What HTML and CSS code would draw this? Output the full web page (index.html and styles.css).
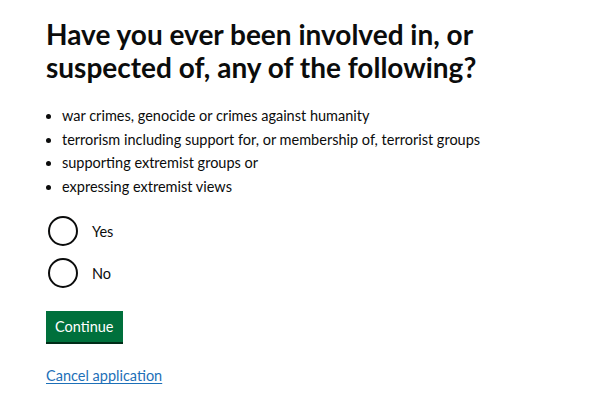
FILE: index.html
```html
<!DOCTYPE html>
<html lang="en">
<head>
    <meta charset="UTF-8">
    <title>Security questions</title>
    <link rel="stylesheet" href="styles.css">
</head>
<body>
    <main class="page">
        <form class="question">
            <h1 class="question_title">Have you ever been involved in, or suspected of, any of the following?</h1>

            <ul class="bullets">
                <li>war crimes, genocide or crimes against humanity</li>
                <li>terrorism including support for, or membership of, terrorist groups</li>
                <li>supporting extremist groups or</li>
                <li>expressing extremist views</li>
            </ul>

            <div class="radios">
                <label class="radio">
                    <input type="radio" name="involved" value="yes">
                    <span class="radio_label">Yes</span>
                </label>
                <label class="radio">
                    <input type="radio" name="involved" value="no">
                    <span class="radio_label">No</span>
                </label>
            </div>

            <button type="submit" class="continue">Continue</button>
        </form>

        <a href="#" class="cancel">Cancel application</a>
    </main>
</body>
</html>
```

FILE: styles.css
```css
/*tag*/
body{
    margin: 0;
    background: #ffffff;
    color: #0b0c0c;
    font-family: Lato, "Noto Sans", Arial, sans-serif;
}

/*class*/
.page{
    padding: 18px 46px 0 46px;
}
.question_title{
    margin: 0 0 20px 0;
    font-size: 28px;
    line-height: 33px;
    font-weight: bold;
    width: 480px;
}
.bullets{
    margin: 0 0 18px 0;
    padding-left: 16px;
    font-size: 14.5px;
    line-height: 23.5px;
    list-style: disc;
}
.radios{
    display: flex;
    flex-direction: column;
    gap: 12px;
    margin-bottom: 23px;
}
.radio{
    display: flex;
    align-items: center;
    gap: 14px;
    font-size: 14.5px;
    cursor: pointer;
}
.radio input{
    appearance: none;
    margin: 0 0 0 2px;
    width: 30px;
    height: 30px;
    border: 2px solid #0b0c0c;
    border-radius: 50%;
    box-sizing: border-box;
}
.continue{
    display: block;
    padding: 7px 9px 7px 9px;
    border: none;
    background: #00703c;
    color: #ffffff;
    font-family: Lato, "Noto Sans", Arial, sans-serif;
    font-size: 14.5px;
    line-height: 17px;
    box-shadow: 0 2px 0 #002d18;
    border-radius: 0;
}
.cancel{
    display: inline-block;
    margin-top: 25px;
    font-size: 14.5px;
    color: #1d70b8;
    text-decoration: underline;
    text-underline-offset: 2px;
}
```
